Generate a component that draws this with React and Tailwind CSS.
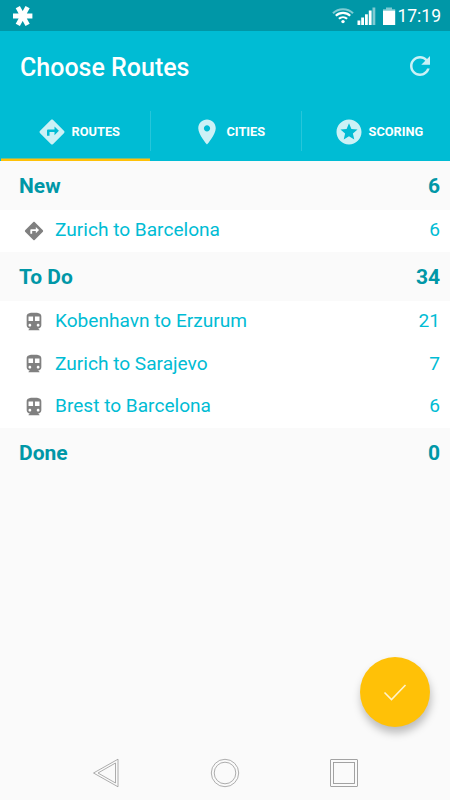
import React from "react";
import clsx from "clsx";

const PATHS = {
  directions:
    "M21.71 11.29l-9-9c-.39-.39-1.02-.39-1.41 0l-9 9c-.39.39-.39 1.02 0 1.41l9 9c.39.39 1.02.39 1.41 0l9-9c.39-.38.39-1.01 0-1.41zM14 14.5V12h-4v3H8v-4c0-.55.45-1 1-1h5V7.5l3.5 3.5-3.5 3.5z",
  place:
    "M12 2C8.13 2 5 5.13 5 9c0 5.25 7 13 7 13s7-7.75 7-13c0-3.87-3.13-7-7-7zm0 9.5c-1.38 0-2.5-1.12-2.5-2.5s1.12-2.5 2.5-2.5 2.5 1.12 2.5 2.5-1.12 2.5-2.5 2.5z",
  stars:
    "M11.99 2C6.47 2 2 6.48 2 12s4.47 10 9.99 10C17.52 22 22 17.52 22 12S17.52 2 11.99 2zm4.24 16L12 15.45 7.77 18l1.12-4.81-3.73-3.23 4.92-.42L12 5l1.92 4.53 4.92.42-3.73 3.23L16.23 18z",
  refresh:
    "M17.65 6.35C16.2 4.9 14.21 4 12 4c-4.42 0-7.99 3.58-7.99 8s3.57 8 7.99 8c3.73 0 6.84-2.55 7.73-6h-2.08c-.82 2.33-3.04 4-5.65 4-3.31 0-6-2.69-6-6s2.69-6 6-6c1.66 0 3.14.69 4.22 1.78L13 11h7V4l-2.35 2.35z",
  train:
    "M12 2c-4.42 0-8 .5-8 4v9.5C4 17.43 5.57 19 7.5 19L6 20.5v.5h12v-.5L16.5 19c1.93 0 3.5-1.57 3.5-3.5V6c0-3.5-3.58-4-8-4zM7.5 17c-.83 0-1.5-.67-1.5-1.5S6.67 14 7.5 14s1.5.67 1.5 1.5S8.33 17 7.5 17zm3.5-6H6V6h5v5zm5.5 6c-.83 0-1.5-.67-1.5-1.5s.67-1.5 1.5-1.5 1.5.67 1.5 1.5-.67 1.5-1.5 1.5zm1.5-6h-5V6h5v5z",
};

const sections = [
  {
    title: "New",
    count: 6,
    routes: [{ name: "Zurich to Barcelona", count: 6, icon: "directions" }],
  },
  {
    title: "To Do",
    count: 34,
    routes: [
      { name: "Kobenhavn to Erzurum", count: 21, icon: "train" },
      { name: "Zurich to Sarajevo", count: 7, icon: "train" },
      { name: "Brest to Barcelona", count: 6, icon: "train" },
    ],
  },
  { title: "Done", count: 0, routes: [] },
];

const Icon = ({ name, className }) => (
  <svg viewBox="0 0 24 24" fill="currentColor" className={clsx("shrink-0", className)}>
    <path d={PATHS[name]} />
  </svg>
);

const StatusBar = () => (
  <div className="h-[31px] bg-[#0097a7] flex items-center pl-[13px] pr-[9px] text-white">
    {/* App notification */}
    <svg viewBox="0 0 20 20" className="w-5 h-5" stroke="white" strokeWidth="4.8">
      <path d="M0 10H19.4M4.8 1.2L14.6 18.8M14.6 1.2L4.8 18.8" />
    </svg>

    {/* Wifi, signal, battery */}
    <svg viewBox="0 0 64 20" className="w-16 h-5 ml-auto" fill="none">
      <g stroke="white" strokeWidth="2.2">
        <path d="M1 7.2C6.5 1.9 15.5 1.9 21 7.2" opacity=".5" />
        <path d="M3.8 9.8C7.8 6 14.2 6 18.2 9.8" />
        <path d="M6.9 12.8C9.2 10.7 12.8 10.7 15.1 12.8" />
      </g>
      <circle cx="11" cy="15.6" r="1.7" fill="white" />
      <g fill="white">
        <rect x="25.5" y="14.5" width="2.8" height="4.5" />
        <rect x="29.2" y="11.5" width="2.8" height="7.5" />
        <rect x="33" y="8.3" width="2.8" height="10.7" />
        <rect x="36.8" y="4.5" width="2.8" height="14.5" />
        <rect x="40.5" y="1.5" width="2.8" height="17.5" opacity=".5" />
        <path d="M54 1.5h6v1.7h3.2v1.3H51V3.2h3z" opacity=".5" />
        <rect x="51" y="4.5" width="12.2" height="14.5" />
      </g>
    </svg>
    <span className="text-[17.5px] leading-none ml-px mt-[2px]">17:19</span>
  </div>
);

const Tab = ({ icon, label, active, className }) => (
  <div
    className={clsx(
      "flex items-center pt-[2px] text-white border-b-2",
      active ? "border-[#ffc107] shadow-[inset_0_-1px_0_#80be78]" : "border-transparent",
      className
    )}
  >
    <Icon name={icon} className="w-[30px] h-[30px] opacity-80" />
    <span className="text-[12.8px] font-bold ml-[5px]">{label}</span>
  </div>
);

const Section = ({ title, count, routes }) => (
  <section>
    <div className="h-[48.5px] flex items-center justify-between pl-[19px] pr-[10px] pt-[3px] text-[21px] font-bold text-[#0097a7]">
      <span>{title}</span>
      <span>{count}</span>
    </div>
    {routes.map((route) => (
      <div
        key={route.name}
        className="h-[42.6px] bg-white flex items-center pl-[22.5px] pr-[10px] text-[19.1px] text-[#00bcd4]"
      >
        <Icon name={route.icon} className="w-[22px] h-[22px] text-[#808080]" />
        <span className="ml-[10.5px] mt-[-1px]">{route.name}</span>
        <span className="ml-auto mt-[-1px]">{route.count}</span>
      </div>
    ))}
  </section>
);

const App = () => {
  return (
    <div className="relative w-[450px] h-[800px] bg-[#fafafa] flex flex-col overflow-hidden font-['Roboto',sans-serif]">
      <StatusBar />

      <header className="h-[130px] bg-[#00bcd4] flex flex-col">
        <div className="h-[71px] flex items-center justify-between pl-5 pr-[15px] text-white">
          <h1 className="text-[25px] font-medium mt-[2px]">Choose Routes</h1>
          <Icon name="refresh" className="w-[30px] h-[30px] mb-px opacity-80" />
        </div>
        <nav className="flex-1 flex">
          <Tab icon="directions" label="ROUTES" active className="ml-px w-[149px] pl-[35.5px]" />
          <div className="w-px h-10 mt-[9px] bg-white/15" />
          <Tab icon="place" label="CITIES" className="w-[150px] pl-[40.5px]" />
          <div className="w-px h-10 mt-[9px] bg-white/15" />
          <Tab icon="stars" label="SCORING" className="flex-1 pl-[31.5px]" />
        </nav>
      </header>

      <main className="flex-1">
        {sections.map((section) => (
          <Section key={section.title} {...section} />
        ))}
      </main>

      {/* Confirm button floats over the list */}
      <button className="absolute left-[360px] top-[657px] w-[70px] h-[70px] rounded-full bg-[#ffc107] shadow-[1px_6px_8px_rgba(0,0,0,0.25)] flex items-center justify-center">
        <svg viewBox="0 0 24 18" className="w-6 h-[18px]" fill="none" stroke="#fff3cd" strokeWidth="1.6">
          <path d="M1.5 9.5L8.5 16.5L22.5 2" />
        </svg>
      </button>

      {/* System navigation */}
      <footer className="h-[54px] flex items-center justify-between pl-[92px] pr-[91px]">
        <svg viewBox="0 0 28 30" className="w-7 h-[30px]" fill="none" stroke="#999" strokeWidth=".8">
          <path d="M1.5 15L26 1.2V28.8z" />
          <path d="M6 15L23.5 5V25z" />
        </svg>
        <svg viewBox="0 0 30 30" className="w-[30px] h-[30px]" fill="none" stroke="#999" strokeWidth=".8">
          <circle cx="15" cy="15" r="13.7" />
          <circle cx="15" cy="15" r="10.8" />
        </svg>
        <svg viewBox="0 0 30 30" className="w-[30px] h-[30px]" fill="none" stroke="#999" strokeWidth=".9">
          <rect x="1.5" y="1.5" width="27" height="27" rx=".5" />
          <rect x="4.5" y="4.5" width="21" height="21" />
        </svg>
      </footer>
    </div>
  );
};

export default App;
